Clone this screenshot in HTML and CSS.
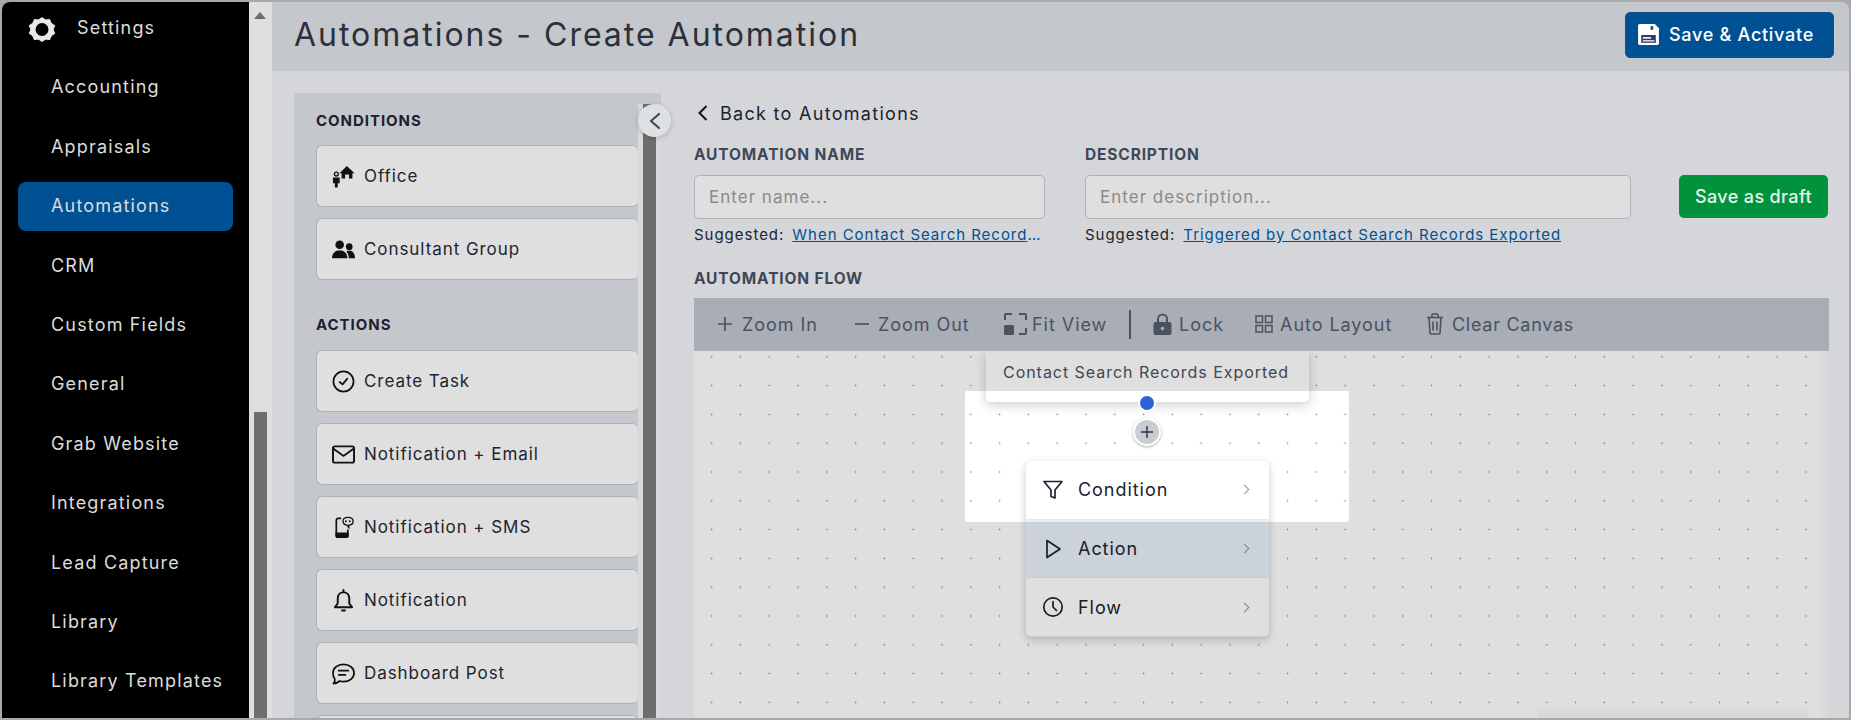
FILE: index.html
```html
<!DOCTYPE html>
<html>
<head>
    <title>Automations - Create Automation</title>
    <link rel="stylesheet" href="styles.css">
</head>
<body>

<div class="frame">
    <aside class="sidebar">
        <nav class="nav">
            <a class="nav-item nav-settings">
                <svg class="gear" viewBox="0 0 26 26"><path d="M13 2.5l3.2 2.2 3.8-.4 1.6 3.5 3.1 2.2-1.5 3.5 1.5 3.5-3.1 2.2-1.6 3.5-3.8-.4L13 24.5l-3.2-2.2-3.8.4-1.6-3.500-3.1-2.200 1.500-3.500-1.500-3.500 3.100-2.200 1.600-3.500 3.800.4z" fill="#e8e8e8" stroke="#e8e8e8" stroke-linejoin="round"/><circle cx="13" cy="13.5" r="6" fill="#000"/></svg>
                <span>Settings</span>
            </a>
            <a class="nav-item">Accounting</a>
            <a class="nav-item">Appraisals</a>
            <a class="nav-item active">Automations</a>
            <a class="nav-item">CRM</a>
            <a class="nav-item">Custom Fields</a>
            <a class="nav-item">General</a>
            <a class="nav-item">Grab Website</a>
            <a class="nav-item">Integrations</a>
            <a class="nav-item">Lead Capture</a>
            <a class="nav-item">Library</a>
            <a class="nav-item">Library Templates</a>
        </nav>
        <div class="scrollbar">
            <div class="scroll-arrow"></div>
            <div class="scroll-thumb"></div>
        </div>
    </aside>

    <main class="main">
        <header class="topbar">
            <h1>Automations - Create Automation</h1>
            <button class="btn-activate">
                <svg class="icon-save" viewBox="0 0 24 24"><path d="M2 3.5A1.5 1.5 0 0 1 3.5 2H18l4 4v14.5a1.5 1.5 0 0 1-1.5 1.500h-17A1.500 1.500 0 0 1 2 20.500z" fill="#fff"/><rect x="14" y="4" width="2.500" height="3.500" fill="#005193"/><rect x="5" y="12.500" width="14" height="7.500" fill="#2d3a6e"/><rect x="6.500" y="14.500" width="8" height="1.500" fill="#fff"/><rect x="6.500" y="17.500" width="11" height="1.200" fill="#fff"/></svg>
                Save &amp; Activate
            </button>
        </header>

        <div class="workspace">
            <section class="palette">
                <div class="palette-list">
                    <h4>CONDITIONS</h4>
                    <div class="card">
                        <svg class="card-icon" viewBox="0 0 24 24"><path d="M15.500 1l8 7.500h-2.200V14h-3.600v-4h-4v4H10V8.500H7.800z" fill="#111"/><circle cx="4.500" cy="9.500" r="2" fill="none" stroke="#111" stroke-width="1.400"/><path d="M1 13h7v6H6v4.500H3V19H1z" fill="#111"/></svg>
                        Office
                    </div>
                    <div class="card">
                        <svg class="card-icon" viewBox="0 0 24 24"><circle cx="8" cy="7" r="4.500" fill="#111"/><circle cx="18" cy="9" r="3.500" fill="#111"/><path d="M0 21c0-5 3-8 8-8s8 3 8 8z" fill="#111"/><path d="M17.500 21c0-3-1-5.500-2.500-7 1-.8 2-1 3-1 3.500 0 6 3 6 8z" fill="#111"/></svg>
                        Consultant Group
                    </div>
                    <h4 class="heading-actions">ACTIONS</h4>
                    <div class="card">
                        <svg class="card-icon" viewBox="0 0 24 24" fill="none" stroke="#111" stroke-width="1.800"><circle cx="12" cy="12" r="10.500"/><path d="M8 12.500l3 2.500 5-6" stroke-linecap="round" stroke-linejoin="round"/></svg>
                        Create Task
                    </div>
                    <div class="card">
                        <svg class="card-icon" viewBox="0 0 24 24" fill="none" stroke="#111" stroke-width="2"><rect x="1" y="3.500" width="22" height="17" rx="2"/><path d="M1.500 6l10.500 7.500L22.500 6"/></svg>
                        Notification + Email
                    </div>
                    <div class="card">
                        <svg class="card-icon" viewBox="0 0 24 24" fill="none" stroke="#111" stroke-width="1.800"><path d="M9.500 2.500H6.500a2 2 0 0 0-2 2V20a2 2 0 0 0 2 2h8a2 2 0 0 0 2-2v-6"/><path d="M4.500 18h12v3a1 1 0 0 1-1 1h-10a1 1 0 0 1-1-1z" fill="#111"/><path d="M16.500 1.500c3.500 0 5.500 1.500 5.500 4s-2 4-4.500 4v2.500l-2-2.500c-2.500-.5-4-2-4-4 0-2.500 2-4 5-4z" stroke-width="1.400"/><circle cx="14.500" cy="5.500" r="1" fill="#111" stroke="none"/><circle cx="18.500" cy="5.500" r="1" fill="#111" stroke="none"/></svg>
                        Notification + SMS
                    </div>
                    <div class="card">
                        <svg class="card-icon" viewBox="0 0 24 24" fill="none" stroke="#111" stroke-width="2"><path d="M12 3.500c-4 0-6 3-6 6.500v5l-3 4h18l-3-4v-5c0-3.500-2-6.500-6-6.500z" stroke-linejoin="round"/><path d="M12 1v2M10.500 22.500h3" stroke-linecap="round"/></svg>
                        Notification
                    </div>
                    <div class="card">
                        <svg class="card-icon" viewBox="0 0 24 24" fill="none" stroke="#111" stroke-width="1.800"><path d="M12 2.500c6 0 11 3.500 11 9s-5 9-11 9c-1.500 0-3-.2-4-.7C6 21.500 3.500 22.500 1.500 22.500c1-1.200 1.800-2.500 1.500-4.500C1.800 16.300 1 14 1 11.500c0-5.500 5-9 11-9z" stroke-linejoin="round"/><path d="M7 9h10M7 13.500h7" stroke-linecap="round"/></svg>
                        Dashboard Post
                    </div>
                    <div class="card"></div>
                </div>
                <div class="palette-scroll">
                    <div class="palette-thumb"></div>
                </div>
                <button class="collapse">
                    <svg viewBox="0 0 16 20" fill="none" stroke="#3f4a5c" stroke-width="2.200" stroke-linecap="round" stroke-linejoin="round"><path d="M12 3L4 10l8 7"/></svg>
                </button>
            </section>

            <section class="editor">
                <a class="back">
                    <svg viewBox="0 0 12 18" fill="none" stroke="#111" stroke-width="2"><path d="M10 2L3 9l7 7"/></svg>
                    Back to Automations
                </a>
                <div class="form-row">
                    <div class="field field-name">
                        <label>AUTOMATION NAME</label>
                        <input type="text" placeholder="Enter name...">
                        <p class="suggest"><span>Suggested:</span> <a class="suggest-link">When Contact Search Records Exported</a></p>
                    </div>
                    <div class="field field-desc">
                        <label>DESCRIPTION</label>
                        <input type="text" placeholder="Enter description...">
                        <p class="suggest"><span>Suggested:</span> <a class="suggest-link">Triggered by Contact Search Records Exported</a></p>
                    </div>
                    <button class="btn-draft">Save as draft</button>
                </div>
                <label class="flow-label">AUTOMATION FLOW</label>

                <div class="toolbar">
                    <span class="tool tool-zoomin">
                        <svg viewBox="0 0 14 14" class="tool-small" fill="none" stroke="#4a5260" stroke-width="1.700"><path d="M7 0v14M0 7h14"/></svg>
                        Zoom In
                    </span>
                    <span class="tool tool-zoomout">
                        <svg viewBox="0 0 14 14" class="tool-small" fill="none" stroke="#4a5260" stroke-width="1.700"><path d="M0 7h14"/></svg>
                        Zoom Out
                    </span>
                    <span class="tool tool-fit">
                        <svg viewBox="0 0 23 22" class="tool-fiticon" fill="none" stroke="#4a5260" stroke-width="2"><path d="M8 1H2a1 1 0 0 0-1 1v5M15 1h6a1 1 0 0 1 1 1v5M22 15v5a1 1 0 0 1-1 1h-6"/><rect x="0" y="12" width="10" height="10" rx="1.500" fill="#4a5260" stroke="none"/></svg>
                        Fit View
                    </span>
                    <span class="tool-sep"></span>
                    <span class="tool tool-lock">
                        <svg viewBox="0 0 19 22" class="tool-lockicon"><path d="M5 10V6a4.500 4.500 0 0 1 9 0v4" fill="none" stroke="#4a5260" stroke-width="2"/><rect x="0.500" y="9" width="18" height="13" rx="2" fill="#4a5260"/><circle cx="9.500" cy="15.500" r="1.800" fill="#a9adb6"/></svg>
                        Lock
                    </span>
                    <span class="tool tool-auto">
                        <svg viewBox="0 0 18 18" class="tool-gridicon" fill="none" stroke="#4a5260" stroke-width="1.500"><rect x="1" y="1" width="6.500" height="6.500"/><rect x="10.500" y="1" width="6.500" height="6.500"/><rect x="1" y="10.500" width="6.500" height="6.500"/><rect x="10.500" y="10.500" width="6.500" height="6.500"/></svg>
                        Auto Layout
                    </span>
                    <span class="tool tool-clear">
                        <svg viewBox="0 0 18 22" class="tool-trashicon" fill="none" stroke="#4a5260" stroke-width="1.600"><path d="M1 4.500h16M6 4.500V2a1 1 0 0 1 1-1h4a1 1 0 0 1 1 1v2.500M3 4.500l1 15.500a1 1 0 0 0 1 1h8a1 1 0 0 0 1-1l1-15.500M7 8.500v9M11 8.500v9"/></svg>
                        Clear Canvas
                    </span>
                </div>

                <div class="canvas">
                    <div class="node">Contact Search Records Exported</div>
                    <div class="node-dot"></div>
                    <div class="add-btn">
                        <svg viewBox="0 0 12 12" fill="none" stroke="#2b3240" stroke-width="1.400"><path d="M6 0v12M0 6h12"/></svg>
                    </div>
                    <div class="menu">
                        <div class="menu-item">
                            <svg viewBox="0 0 22 22" fill="none" stroke="#1c2230" stroke-width="1.700" stroke-linejoin="round"><path d="M2 2.500h18l-7 8.500v8l-4-1.500V11z"/></svg>
                            <span>Condition</span>
                            <b class="menu-arrow"></b>
                        </div>
                        <div class="menu-item hover">
                            <svg viewBox="0 0 22 22" fill="none" stroke="#1c2230" stroke-width="1.700" stroke-linejoin="round"><path d="M5 2.500L18 11 5 19.500z"/></svg>
                            <span>Action</span>
                            <b class="menu-arrow"></b>
                        </div>
                        <div class="menu-item">
                            <svg viewBox="0 0 22 22" fill="none" stroke="#1c2230" stroke-width="1.700" stroke-linecap="round"><circle cx="11" cy="11" r="9.200"/><path d="M11 5.500V11l3.500 3.500"/></svg>
                            <span>Flow</span>
                            <b class="menu-arrow"></b>
                        </div>
                    </div>
                    <div class="minimap"></div>
                    <div class="canvas-edge"></div>
                    <div class="spotlight"></div>
                </div>
            </section>
        </div>
    </main>
</div>

</body>
</html>
```

FILE: styles.css
```css
* { box-sizing: border-box; }
html, body { margin: 0; height: 100%; overflow: hidden; background: #a9a9a9; }
body { font-family: Inter, 'Open Sans', sans-serif; letter-spacing: 0.06em; }
button, input { font-family: Inter, sans-serif; }

.frame {
    height: 720px;
    border: 2px solid #a9a9a9;
    border-radius: 10px 10px 0 0;
    display: flex;
    overflow: hidden;
    background: #d4d6da;
}

/* left navigation */
.sidebar {
    width: 270px;
    flex: none;
    display: flex;
    background: #000;
    border-right: 1px solid #4a5568;
}
.nav {
    width: 247px;
    flex: none;
    padding: 2px 16px 0;
}
.nav-item {
    display: flex;
    align-items: center;
    height: 49px;
    margin-bottom: 10.4px;
    padding: 0 0 2px 33px;
    border-radius: 8px;
    color: #dcdcdc;
    font-size: 18px;
    letter-spacing: 0.065em;
}
.nav-item.active { background: #005193; }
.nav-settings { padding-left: 10px; }
.gear { width: 28px; height: 28px; margin: 2px 21px 0 0; }
.scrollbar {
    flex: 1;
    background: #dfdfdf;
    padding: 10px 5px 0;
    display: flex;
    flex-direction: column;
    justify-content: space-between;
}
.scroll-arrow {
    width: 0;
    border-left: 6px solid transparent;
    border-right: 6px solid transparent;
    border-bottom: 7px solid #6e6e6e;
}
.scroll-thumb { height: 306px; background: #6e6e6e; width: 13px; }

/* main column */
.main { flex: 1; min-width: 0; display: flex; flex-direction: column; }
.topbar {
    height: 69px;
    flex: none;
    background: #c4c7cc;
    display: flex;
    align-items: center;
    justify-content: space-between;
    padding: 0 15px 4px 22px;
}
.topbar h1 {
    margin: 0;
    font-size: 32px;
    font-weight: 400;
    letter-spacing: 0.062em;
    color: #2b303b;
}
.btn-activate {
    width: 209px;
    height: 46px;
    background: #005193;
    color: #fff;
    border: 1px solid #1d4f85;
    border-radius: 5px;
    font-size: 18px;
    font-weight: 500;
    letter-spacing: 0.04em;
    display: flex;
    align-items: center;
    gap: 8px;
    padding-left: 10px;
}
.icon-save { width: 25px; height: 25px; }

.workspace { flex: 1; min-height: 0; display: flex; }

/* node palette */
.palette {
    position: relative;
    width: 367px;
    flex: none;
    margin: 22px 0 0 22px;
    background: #c4c7cc;
    display: flex;
}
.palette-list { width: 344px; padding: 0 0 0 22px; overflow: hidden; }
.palette-list h4 {
    margin: 20px 0 17px;
    height: 15px;
    line-height: 15px;
    font-size: 15px;
    font-weight: 700;
    color: #1c2130;
}
.palette-list .heading-actions { margin: 37px 0 18px; }
.card {
    height: 62px;
    margin-bottom: 11px;
    border: 1px solid #adb1ba;
    border-right: 0;
    border-radius: 6px;
    background: #dfdfdf;
    display: flex;
    align-items: center;
    padding-left: 15px;
    color: #20242e;
    font-size: 17px;
    letter-spacing: 0.055em;
}
.card-icon { width: 23px; height: 23px; margin-right: 9px; flex: none; }
.palette-scroll {
    width: 23px;
    margin-top: 11px;
    background: #d8d9dc;
    padding: 0 5px;
}
.palette-thumb { height: 100%; background: #6e6e6e; }
.collapse {
    position: absolute;
    left: 344px;
    top: 11px;
    width: 33px;
    height: 33px;
    padding: 0;
    border: 0;
    border-radius: 50%;
    background: #dfe0e2;
    box-shadow: 0 1px 5px rgba(0,0,0,0.2);
    display: flex;
    align-items: center;
    justify-content: center;
}
.collapse svg { width: 16px; height: 20px; }

/* right editor */
.editor { flex: 1; min-width: 0; margin-left: 33px; padding-right: 20px; display: flex; flex-direction: column; }
.back {
    display: flex;
    align-items: center;
    gap: 11px;
    margin-top: 30px;
    height: 24px;
    font-size: 18px;
    letter-spacing: 0.072em;
    color: #20242e;
}
.back svg { width: 13px; height: 18px; margin-left: 2px; }
.form-row { display: flex; margin-top: 21px; }
.field label, .flow-label {
    display: block;
    height: 17px;
    line-height: 17px;
    font-size: 15.5px;
    font-weight: 700;
    letter-spacing: 0.055em;
    color: #3f4756;
}
.field input {
    display: block;
    width: 100%;
    height: 44px;
    margin-top: 12px;
    padding: 0 14px;
    background: #dfdfdf;
    border: 1px solid #adb1ba;
    border-radius: 5px;
    font-size: 17px;
    letter-spacing: 0.06em;
}
.field input::placeholder { color: #8a8a8a; }
.field-name { width: 351px; margin-right: 40px; }
.field-desc { width: 546px; margin-right: 48px; }
.suggest {
    margin: 7px 0 0;
    display: flex;
    gap: 8px;
    font-size: 15px;
    letter-spacing: 0.065em;
    line-height: 18px;
    color: #20242e;
}
.suggest span { flex: none; }
.suggest-link {
    color: #005193;
    text-decoration: underline;
    overflow: hidden;
    white-space: nowrap;
    text-overflow: ellipsis;
}
.btn-draft {
    width: 149px;
    height: 43px;
    margin-top: 29px;
    background: #00933c;
    color: #e8f4ec;
    border: 0;
    border-radius: 5px;
    font-size: 18px;
    font-weight: 500;
    letter-spacing: 0.02em;
}
.flow-label { margin-top: 26px; }

/* canvas toolbar */
.toolbar {
    height: 53px;
    flex: none;
    margin-top: 11px;
    padding: 0 0 1px 24px;
    background: #a9adb6;
    display: flex;
    align-items: center;
    color: #4a5260;
    font-size: 18px;
}
.tool { display: flex; align-items: center; white-space: nowrap; flex: none; }
.tool-zoomin { gap: 10px; width: 137px; }
.tool-zoomout { gap: 9px; width: 149px; }
.tool-fit { gap: 5px; width: 125px; }
.tool-small { width: 14px; height: 14px; }
.tool-fiticon { width: 23px; height: 22px; }
.tool-sep { width: 2px; height: 29px; background: #4a5260; margin-right: 22px; flex: none; }
.tool-lock { gap: 7px; width: 102px; }
.tool-lockicon { width: 19px; height: 22px; }
.tool-auto { gap: 7px; width: 171px; }
.tool-gridicon { width: 18px; height: 18px; }
.tool-clear { gap: 8px; letter-spacing: 0.04em; }
.tool-trashicon { width: 18px; height: 22px; }

/* flow canvas: nodes sit freely on it */
.canvas {
    position: relative;
    flex: 1;
    overflow: hidden;
    background-color: #fff;
    background-image: radial-gradient(circle, #999 0.8px, transparent 1.1px);
    background-size: 28.8px 28.8px;
    background-position: 3.2px -8.6px;
}
.node {
    position: absolute;
    left: 292px;
    top: 0;
    width: 323px;
    height: 51px;
    padding: 10px 0 0 17px;
    background: #fff;
    border-radius: 0 0 5px 5px;
    box-shadow: 0 3px 12px rgba(0,0,0,0.2);
    font-size: 16px;
    line-height: 22px;
    color: #4a5260;
}
.node-dot {
    position: absolute;
    left: 444px;
    top: 43px;
    width: 18px;
    height: 18px;
    border: 2px solid #fff;
    border-radius: 50%;
    background: #2a64d6;
}
.add-btn {
    position: absolute;
    left: 439px;
    top: 67px;
    width: 28px;
    height: 28px;
    border: 2px solid #fff;
    border-radius: 50%;
    background: #c9ccd3;
    box-shadow: 0 1px 3px rgba(0,0,0,0.3);
    display: flex;
    align-items: center;
    justify-content: center;
}
.add-btn svg { width: 12px; height: 12px; }
.menu {
    position: absolute;
    left: 332px;
    top: 110px;
    width: 243px;
    height: 176px;
    background: #fff;
    border-radius: 6px;
    box-shadow: 0 3px 10px rgba(0,0,0,0.2);
    overflow: hidden;
}
.menu-item {
    height: 58.7px;
    display: flex;
    align-items: center;
    padding: 0 17px 0 16px;
    font-size: 18px;
    color: #1c2230;
    border-bottom: 1px solid #e6e9ee;
}
.menu-item svg { width: 22px; height: 22px; margin-right: 14px; flex: none; }
.menu-item span { flex: 1; }
.menu-item.hover { background: #e8f0f8; }
.menu-arrow {
    width: 7px;
    height: 7px;
    border-top: 1.5px solid #8f97a5;
    border-right: 1.5px solid #8f97a5;
    transform: rotate(45deg);
    margin-right: 4px;
}
.minimap {
    position: absolute;
    left: 844px;
    bottom: 0;
    width: 270px;
    height: 9px;
    background: #f8f8f8;
}
.canvas-edge {
    position: absolute;
    right: 0;
    top: 0;
    bottom: 0;
    width: 11px;
    background: linear-gradient(to right, transparent, rgba(0,0,0,0.03));
}
.spotlight {
    position: absolute;
    left: 271px;
    top: 40px;
    width: 384px;
    height: 131px;
    border-radius: 2px;
    box-shadow: 0 0 0 2000px rgba(0,0,0,0.125);
}
```
